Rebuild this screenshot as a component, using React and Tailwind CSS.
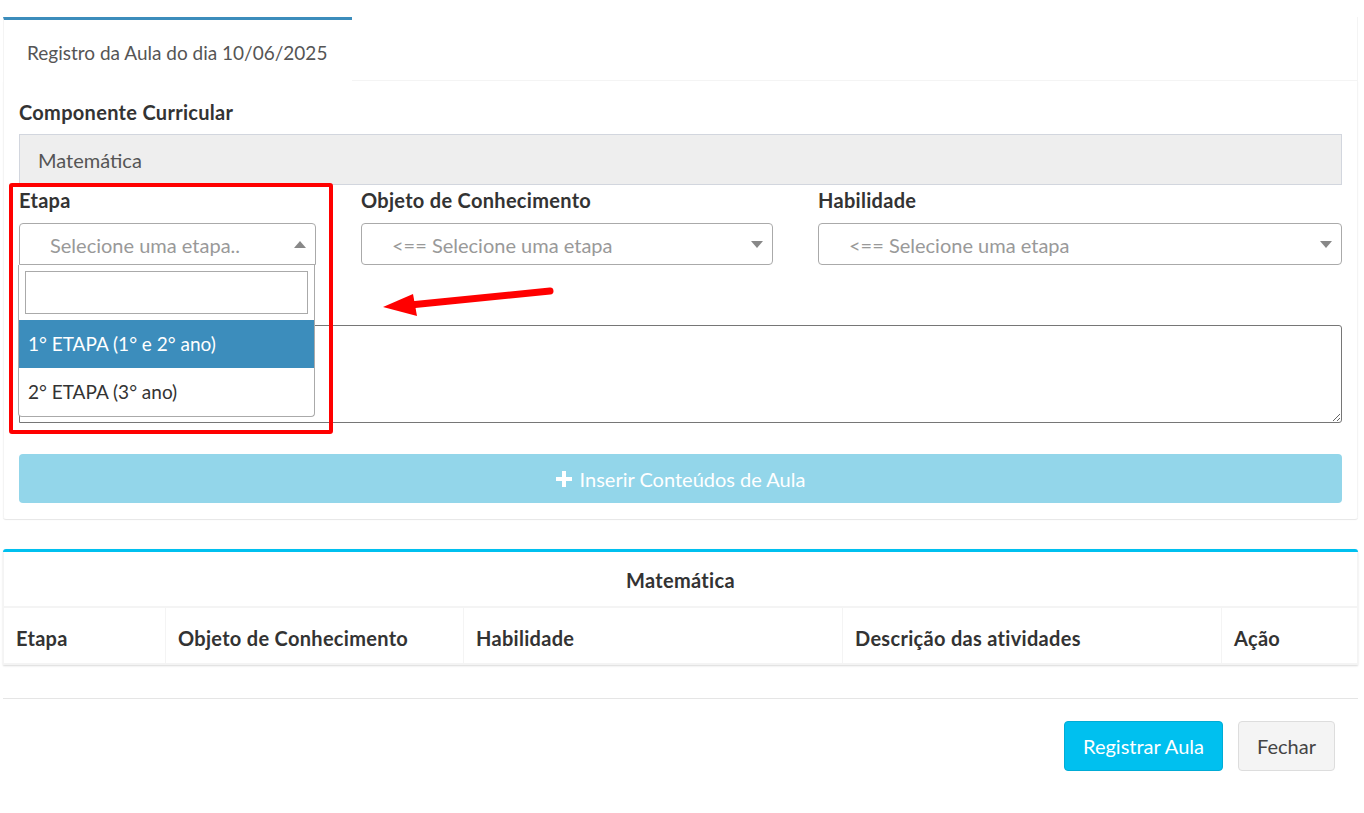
import { useState } from "react";

const font = { fontFamily: "Lato, 'Noto Sans', sans-serif" };

function Caret({ up }) {
  return (
    <svg width="12" height="7" viewBox="0 0 12 7" className="absolute right-[9px] top-[17px]">
      {up ? <path d="M0 7 L6 0 L12 7 Z" fill="#888" /> : <path d="M0 0 L6 7 L12 0 Z" fill="#888" />}
    </svg>
  );
}

function Select({ placeholder, open, className }) {
  return (
    <div
      className={
        "relative h-[42px] border border-[#aaa] bg-white " +
        (open ? "rounded-t-[4px] " : "rounded-[4px] ") +
        className
      }
    >
      <span className="absolute left-[30px] top-[8px] text-[20px] leading-[26px] text-[#999]">{placeholder}</span>
      <Caret up={open} />
    </div>
  );
}

function Label({ children }) {
  return <div className="text-[20px] font-bold leading-[24px] tracking-[0.3px]">{children}</div>;
}

export default function App() {
  const [active] = useState(0);
  const options = ["1° ETAPA (1° e 2° ano)", "2° ETAPA (3° ano)"];

  return (
    <div className="relative min-h-[813px] bg-white pt-[17px] text-[#333]" style={font}>
      {/* Card 1 with tab */}
      <div className="ml-[3px] w-[1355px]">
        <div className="flex">
          <div className="h-[64px] w-[349px] border-t-[3px] border-l border-t-[#3c8dbc] border-l-[#f4f4f4] bg-white pl-[23px] pt-[19px] text-[19px] text-[#555]">
            Registro da Aula do dia 10/06/2025
          </div>
          <div className="flex-1 border-b border-r border-[#f4f4f4]" />
        </div>
        <div className="rounded-b-[3px] border-x border-[#f4f4f4] px-[15px] pb-[16px] pt-[19px] shadow-[0_1px_1px_rgba(0,0,0,0.1)]">
          <Label>Componente Curricular</Label>
          <div className="mt-[10px] flex h-[51px] items-center border border-[#d2d6de] bg-[#eee] pl-[18px] text-[20px] text-[#555]">
            Matemática
          </div>
          <div className="mt-[3px] flex gap-[45px]">
            <div className="w-[297px]">
              <Label>Etapa</Label>
              <Select placeholder="Selecione uma etapa.." open className="mt-[11px]" />
            </div>
            <div className="w-[412px]">
              <Label>Objeto de Conhecimento</Label>
              <Select placeholder="<== Selecione uma etapa" className="mt-[11px]" />
            </div>
            <div className="flex-1">
              <Label>Habilidade</Label>
              <Select placeholder="<== Selecione uma etapa" className="mt-[11px]" />
            </div>
          </div>
          <div className="mt-[28px]">
            <Label>Descrição das atividades</Label>
          </div>
          <textarea
            className="mt-[8px] block h-[98px] w-full rounded-tr-[3px] rounded-br-[3px] border border-[#767676] bg-white"
            style={font}
          />
          <div className="mt-[31px] flex h-[49px] items-center justify-center gap-[8px] rounded-[4px] bg-[#93d6ea] text-[20px] text-white">
            <svg width="16" height="16" viewBox="0 0 16 16">
              <path d="M6 0h4v6h6v4h-6v6h-4v-6h-6v-4h6z" fill="#fff" />
            </svg>
            Inserir Conteúdos de Aula
          </div>
        </div>
      </div>

      {/* Card 2: table */}
      <div className="ml-[3px] mt-[30px] w-[1355px] rounded-t-[3px] border-t-[3px] border-[#00c0ef] shadow-[0_1px_2px_rgba(0,0,0,0.15)]">
        <div className="flex h-[56px] items-center justify-center border-b-2 border-x border-[#f4f4f4] pt-[2px] text-[20px] font-bold tracking-[0.3px]">
          Matemática
        </div>
        <div className="flex h-[57px] items-center border-x border-b-2 border-[#f4f4f4] text-[20px] font-bold tracking-[0.3px]">
          <div className="flex h-full w-[162px] items-center border-r border-[#f4f4f4] pl-[12px] pt-[4px]">Etapa</div>
          <div className="flex h-full w-[298px] items-center border-r border-[#f4f4f4] pl-[12px] pt-[4px]">Objeto de Conhecimento</div>
          <div className="flex h-full w-[379px] items-center border-r border-[#f4f4f4] pl-[12px] pt-[4px]">Habilidade</div>
          <div className="flex h-full w-[379px] items-center border-r border-[#f4f4f4] pl-[12px] pt-[4px]">Descrição das atividades</div>
          <div className="flex h-full flex-1 items-center pl-[12px] pt-[4px]">Ação</div>
        </div>
      </div>

      {/* Footer */}
      <div className="ml-[3px] mt-[33px] w-[1355px] border-t border-[#e5e5e5] pr-[23px] pt-[22px]">
        <div className="flex justify-end gap-[15px]">
          <div className="flex h-[50px] w-[159px] items-center justify-center rounded-[4px] border border-[#00acd6] bg-[#00c0ef] text-[20px] text-white">
            Registrar Aula
          </div>
          <div className="flex h-[50px] w-[97px] items-center justify-center rounded-[4px] border border-[#ddd] bg-[#f4f4f4] text-[20px] text-[#444]">
            Fechar
          </div>
        </div>
      </div>

      {/* Open dropdown overlay */}
      <div className="absolute left-[18px] top-[265px] w-[297px] rounded-b-[4px] border border-t-0 border-[#aaa] bg-white">
        <div className="px-[6px] pt-[6px] pb-[6px]">
          <div className="h-[43px] border border-[#aaa] bg-white" />
        </div>
        {options.map((o, i) => (
          <div
            key={o}
            className={
              i === active
                ? "flex h-[48px] items-center bg-[#3c8dbc] pl-[9px] text-[19px] text-white"
                : "flex h-[48px] items-center pl-[9px] text-[19px] text-[#333]"
            }
          >
            {o}
          </div>
        ))}
      </div>

      {/* Annotation: red box */}
      <div className="pointer-events-none absolute left-[9px] top-[183px] h-[251px] w-[324px] rounded-[3px] border-4 border-[#ff0000]" />

      {/* Annotation: arrow */}
      <svg className="pointer-events-none absolute left-[375px] top-[280px]" width="190" height="45" viewBox="0 0 190 45">
        <line x1="175" y1="11" x2="35" y2="25" stroke="#ff0000" strokeWidth="7" strokeLinecap="round" />
        <path d="M8 27 L38 14 L42 36 Z" fill="#ff0000" />
      </svg>
    </div>
  );
}
